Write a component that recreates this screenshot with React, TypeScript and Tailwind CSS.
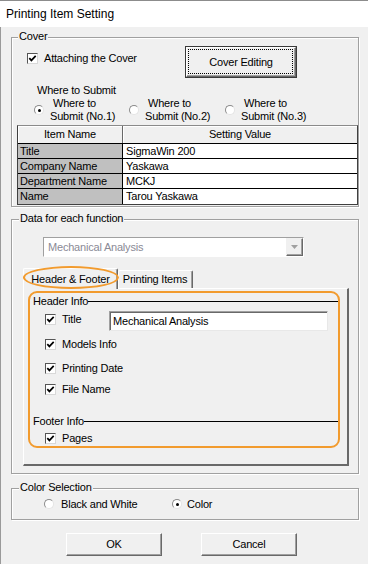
import React from "react";

const Check = ({ checked = true }: { checked?: boolean }) => (
  <div className="w-[11px] h-[11px] shrink-0 bg-white border border-t-[#555555] border-l-[#555555] border-r-[#d8d8d8] border-b-[#d8d8d8] flex items-center justify-center">
    {checked && (
      <svg width="9" height="9" viewBox="0 0 9 9">
        <path d="M1.3 4.1 L3.4 6.4 L7.7 1.9" fill="none" stroke="#000" strokeWidth="1.7" />
      </svg>
    )}
  </div>
);

const Radio = ({ on = false }: { on?: boolean }) => (
  <div className="w-[10px] h-[10px] shrink-0 rounded-full bg-white border border-t-[#8a8a8a] border-l-[#8a8a8a] border-r-[#e4e4e4] border-b-[#e4e4e4] flex items-center justify-center">
    {on && <div className="w-[3px] h-[3px] rounded-full bg-black" />}
  </div>
);

const Group = ({
  label,
  className,
  labelLeft,
  children,
}: {
  label: string;
  className: string;
  labelLeft: string;
  children?: React.ReactNode;
}) => (
  <div
    className={`relative w-[348px] border border-[#a0a0a0] shadow-[inset_1px_1px_0_#ffffff,1px_1px_0_#ffffff] ${className}`}
  >
    <span className={`absolute -top-[8px] ${labelLeft} bg-[#f0f0f0] px-[1px] leading-[13px] whitespace-nowrap`}>
      {label}
    </span>
    {children}
  </div>
);

const Btn = ({ label, className }: { label: string; className: string }) => (
  <div
    className={`h-[23px] w-[96px] bg-[#f0f0f0] border border-t-white border-l-white border-r-[#696969] border-b-[#696969] shadow-[inset_-1px_-1px_0_#a0a0a0] flex items-center justify-center ${className}`}
  >
    {label}
  </div>
);

const rows: [string, string][] = [
  ["Title", "SigmaWin 200"],
  ["Company Name", "Yaskawa"],
  ["Department Name", "MCKJ"],
  ["Name", "Tarou Yaskawa"],
];

export default function App() {
  return (
    <div className="relative w-[368px] h-[564px] overflow-hidden bg-[#f0f0f0] flex flex-col font-['Liberation_Sans',Arial,sans-serif] text-[11px] text-black tracking-[-0.2px]">
      {/* Title bar */}
      <div className="h-[27px] shrink-0 bg-white border-t border-[#8c8c8c] flex items-center pl-[6px] text-[12px] tracking-normal">
        Printing Item Setting
      </div>

      {/* Body */}
      <div className="flex-1 border-l border-[#9a9a9a] pl-[10px] flex flex-col">
        {/* Cover */}
        <Group label="Cover" labelLeft="left-[6px]" className="mt-[10px] h-[170px]">
          <div className="flex items-start">
            <div className="mt-[12px] ml-[15px] w-[158px] h-[16px] flex items-center">
              <Check />
              <span className="ml-[6px]">Attaching the Cover</span>
            </div>
            <div className="relative mt-[8px] w-[112px] h-[32px] border border-[#3a3a3a]">
              <div className="h-full bg-[#f0f0f0] border border-t-white border-l-white border-r-[#696969] border-b-[#696969] shadow-[inset_-1px_-1px_0_#a0a0a0] flex items-center justify-center">
                Cover Editing
              </div>
              <div className="absolute top-[2px] left-[2px] right-[3px] bottom-[3px] border border-dotted border-black" />
            </div>
          </div>
          <div className="mt-[6px] ml-[25px] leading-[13px]">Where to Submit</div>
          <div className="flex h-[26px] ml-[22px]">
            {["No.1", "No.2", "No.3"].map((n, i) => (
              <div key={n} className={`flex items-center ${i === 0 ? "w-[95px]" : "w-[96px]"}`}>
                <Radio on={i === 0} />
                <div className="ml-[6px] leading-[13px] whitespace-nowrap">
                  <div className="pl-[3px]">Where to</div>
                  <div>Submit ({n})</div>
                </div>
              </div>
            ))}
          </div>
          {/* Table */}
          <div className="mt-[2px] ml-[5px] w-[341px] border border-[#404040] border-t-[#8a8a8a]">
            <div className="flex h-[18px] border-b border-black">
              <div className="w-[104px] bg-[#f0f0f0] shadow-[inset_1px_1px_0_#ffffff] flex items-center justify-center">
                Item Name
              </div>
              <div className="w-px bg-[#696969]" />
              <div className="flex-1 bg-[#f0f0f0] shadow-[inset_1px_1px_0_#ffffff] flex items-center justify-center">
                Setting Value
              </div>
            </div>
            {rows.map(([k, v], i) => (
              <div
                key={k}
                className={`flex h-[15px] ${i < rows.length - 1 ? "border-b border-black" : ""}`}
              >
                <div className="w-[104px] bg-[#c0c0c0] pl-[2px] flex items-center whitespace-nowrap">{k}</div>
                <div className="w-px bg-black" />
                <div className="flex-1 bg-white pl-[3px] flex items-center">{v}</div>
              </div>
            ))}
          </div>
        </Group>

        {/* Data for each function */}
        <Group label="Data for each function" labelLeft="left-[7px]" className="mt-[12px] h-[255px]">
          <div className="ml-[31px] mt-[17px] w-[261px] h-[20px] flex bg-white border border-t-[#a0a0a0] border-l-[#a0a0a0] border-r-white border-b-white">
            <div className="flex-1 pl-[4px] flex items-center text-[#8a8a96]">Mechanical Analysis</div>
            <div className="w-[17px] h-full bg-[#f0f0f0] border border-t-[#f0f0f0] border-l-[#f0f0f0] border-r-[#696969] border-b-[#696969] shadow-[inset_-1px_-1px_0_#a0a0a0] flex items-center justify-center">
              <svg width="7" height="4" viewBox="0 0 7 4">
                <polygon points="0,0 7,0 3.5,4" fill="#a0a0a0" />
              </svg>
            </div>
          </div>

          {/* Tabs */}
          <div className="relative z-10 ml-[11px] mt-[11px] h-[20px] flex items-end">
            <div className="w-[95px] h-[21px] -mb-px bg-[#f0f0f0] border-t border-l border-white border-r border-r-[#696969] shadow-[inset_-1px_0_0_#a0a0a0] rounded-t-[2px] flex items-center justify-center">
              Header &amp; Footer
            </div>
            <div className="w-[75px] h-[18px] bg-[#f0f0f0] border-t border-white border-r border-r-[#696969] shadow-[inset_-1px_0_0_#a0a0a0,inset_1px_0_0_#ffffff] rounded-t-[2px] flex items-center justify-center">
              Printing Items
            </div>
          </div>
          <div className="ml-[11px] w-[326px] h-[178px] border-t border-l border-white border-r-2 border-b-2 border-r-[#696969] border-b-[#696969] flex flex-col">
            <div className="mt-[6px] ml-[9px] w-[306px] h-[13px] flex items-center">
              <span className="whitespace-nowrap">Header Info</span>
              <div className="flex-1 h-px bg-black" />
            </div>
            <div className="mt-[3px] h-[20px] flex items-start">
              <div className="ml-[21px] w-[64px] h-[16px] flex items-center">
                <Check />
                <span className="ml-[6px]">Title</span>
              </div>
              <div className="w-[219px] h-[20px] bg-white border border-t-[#a0a0a0] border-l-[#a0a0a0] border-r-[#e8e8e8] border-b-[#e8e8e8] shadow-[inset_1px_1px_0_#696969] pl-[3px] flex items-center">
                Mechanical Analysis
              </div>
            </div>
            <div className="mt-[5px] ml-[21px] h-[16px] flex items-center">
              <Check />
              <span className="ml-[6px]">Models Info</span>
            </div>
            <div className="mt-[8px] ml-[21px] h-[16px] flex items-center">
              <Check />
              <span className="ml-[6px]">Printing Date</span>
            </div>
            <div className="mt-[5px] ml-[21px] h-[16px] flex items-center">
              <Check />
              <span className="ml-[6px]">File Name</span>
            </div>
            <div className="mt-[18px] ml-[9px] w-[306px] h-[13px] flex items-center">
              <span className="whitespace-nowrap">Footer Info</span>
              <div className="flex-1 h-px bg-black" />
            </div>
            <div className="mt-[2px] ml-[21px] h-[16px] flex items-center">
              <Check />
              <span className="ml-[6px]">Pages</span>
            </div>
          </div>
        </Group>

        {/* Color Selection */}
        <Group label="Color Selection" labelLeft="left-[7px]" className="mt-[14px] h-[32px]">
          <div className="h-full flex items-center">
            <div className="ml-[32px] w-[128px] flex items-center">
              <Radio />
              <span className="ml-[7px]">Black and White</span>
            </div>
            <div className="flex items-center">
              <Radio on />
              <span className="ml-[5px]">Color</span>
            </div>
          </div>
        </Group>

        {/* Buttons */}
        <div className="mt-[13px] ml-[55px] flex">
          <Btn label="OK" className="" />
          <Btn label="Cancel" className="ml-[39px]" />
        </div>
      </div>

      {/* Orange annotation overlays */}
      <div className="absolute z-20 left-[23px] top-[266px] w-[96px] h-[23px] rounded-[50%] border-2 border-[#f29b2e] pointer-events-none" />
      <div className="absolute z-20 left-[28px] top-[291px] w-[312px] h-[157px] rounded-[9px] border-2 border-[#f29b2e] pointer-events-none" />
    </div>
  );
}
